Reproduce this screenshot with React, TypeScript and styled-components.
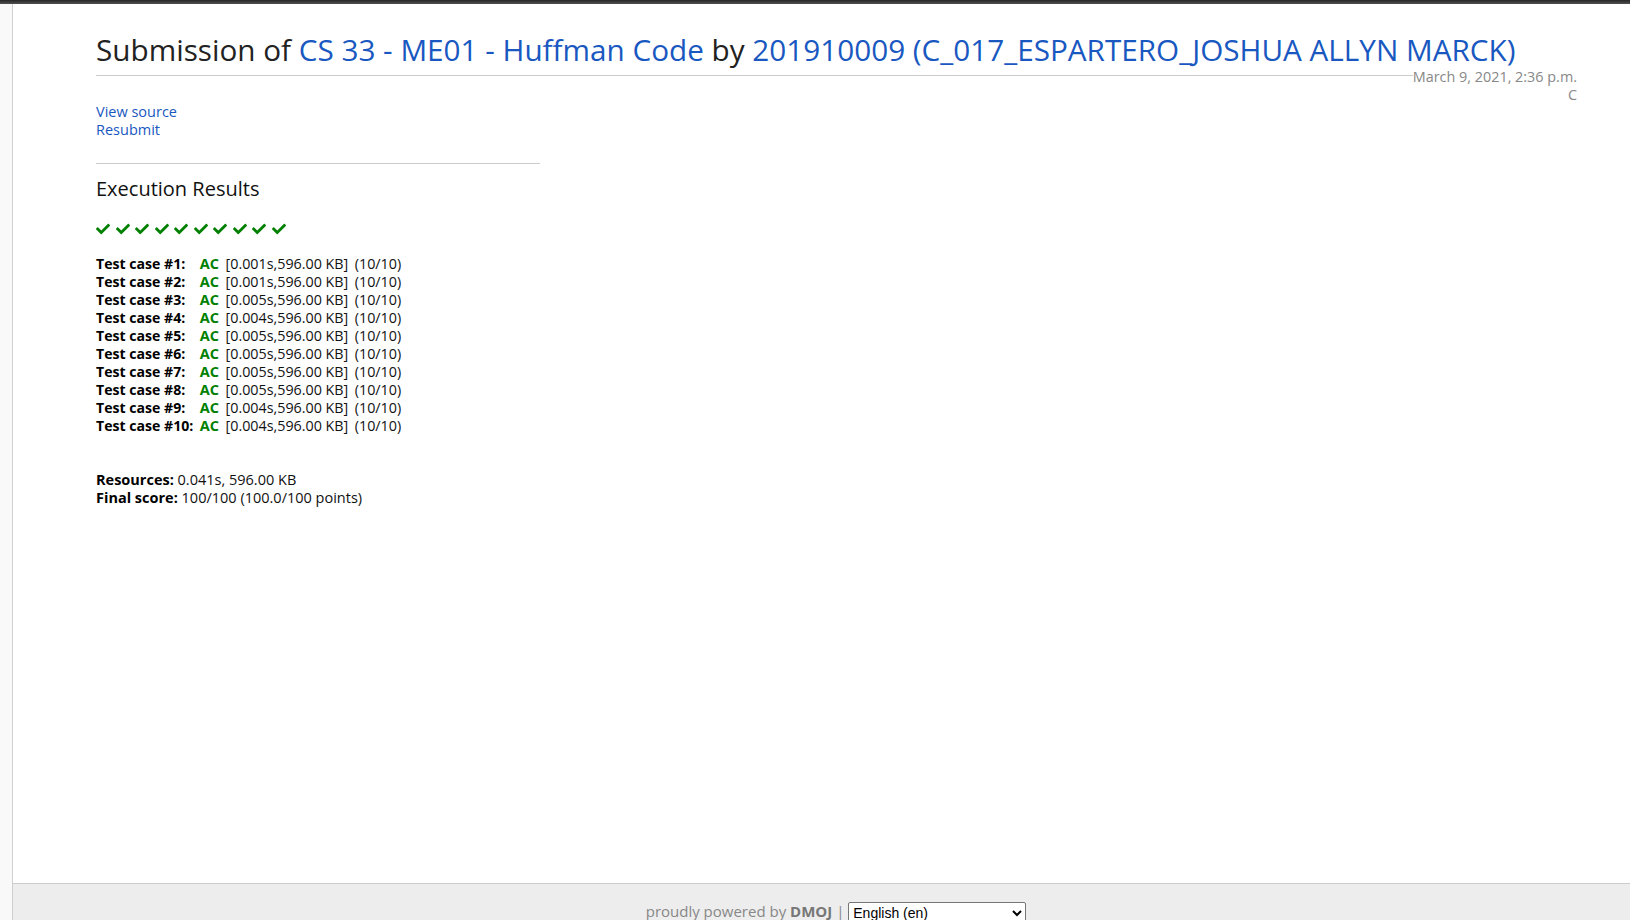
import React from 'react';
import styled, { createGlobalStyle } from 'styled-components';
import { FaCheck } from 'react-icons/fa';

const GlobalStyle = createGlobalStyle`
  html, body { margin: 0; padding: 0; }
  body {
    background: #f9f9f9;
    font-family: "Open Sans", "Noto Sans", sans-serif;
    color: #000;
    overflow: hidden;
  }
  a { color: #1958c1; text-decoration: none; }
`;

const TopBar = styled.div`
  height: 4px;
  background: linear-gradient(#262626, #505050);
`;

const Frame = styled.div`
  margin-left: 12px;
  border-left: 1px solid #cfcfcf;
  background: #fff;
  display: flex;
  flex-direction: column;
`;

const Main = styled.main`
  min-height: 879px;
  box-sizing: border-box;
  padding: 29px 53px 0 83px;
`;

const Title = styled.h2`
  margin: 0;
  font-size: 29.7px;
  font-weight: 400;
  line-height: 34px;
  color: #222;
  white-space: nowrap;
`;

const InfoRow = styled.div`
  display: flex;
  align-items: flex-start;
`;

const Rule = styled.div`
  flex: 1;
  height: 1px;
  margin-top: 8px;
  background: #cccccc;
`;

const SubInfo = styled.div`
  padding-top: 1px;
  margin-bottom: -1px;
  text-align: right;
  font-size: 14.4px;
  line-height: 18px;
  color: #888;
`;

const Actions = styled.div`
  display: flex;
  flex-direction: column;
  font-size: 14.5px;
  line-height: 18px;
`;

const Divider = styled.hr`
  width: 444px;
  margin: 24px 0 0;
  border: 0;
  border-top: 1px solid #cccccc;
  text-align: left;
`;

const SectionTitle = styled.h3`
  margin: 13px 0 0;
  font-size: 20px;
  font-weight: 400;
  line-height: 24px;
  color: #111;
`;

const CheckRow = styled.div`
  display: flex;
  gap: 5.5px;
  margin-top: 21px;
  height: 14px;
  align-items: center;
  color: #008000;
`;

const CaseGrid = styled.div`
  display: grid;
  grid-template-columns: auto auto auto auto;
  justify-content: start;
  column-gap: 6.5px;
  margin-top: 19px;
  font-size: 14.3px;
  line-height: 18px;
  color: #111;
`;

const CaseLabel = styled.span`
  font-size: 14.1px;
  font-weight: 700;
  color: #000;
`;

const Verdict = styled.span`
  font-size: 14.5px;
  font-weight: 700;
  color: #008000;
`;

const Summary = styled.div`
  margin-top: 36px;
  font-size: 14.5px;
  line-height: 18px;
  color: #111;
`;

const SummaryLine = styled.div`
  height: 18px;
`;

const SummaryKey = styled.b`
  color: #000;
`;

const Footer = styled.footer`
  border-top: 1px solid #cccccc;
  background: #ededed;
  padding: 18px 0 0 29px;
  height: 60px;
  text-align: center;
  font-size: 15px;
  line-height: 18px;
  color: #888;
`;

const Brand = styled.b`
  color: #777;
`;

const LangSelect = styled.select`
  width: 178px;
  height: 22px;
  font-family: Arial, "Liberation Sans", sans-serif;
  font-size: 14px;
  color: #000;
  background: #fff;
  border: 1px solid #767676;
  border-radius: 2px;
  vertical-align: top;
`;

const cases = [
  '0.001s', '0.001s', '0.005s', '0.004s', '0.005s',
  '0.005s', '0.005s', '0.005s', '0.004s', '0.004s',
];

export default function App() {
  return (
    <>
      <GlobalStyle />
      <TopBar />
      <Frame>
        <Main>
          <Title>
            Submission of <a href="#">CS 33 - ME01 - Huffman Code</a> by{' '}
            <a href="#">201910009 (C_017_ESPARTERO_JOSHUA ALLYN MARCK)</a>
          </Title>
          <InfoRow>
            <Rule />
            <SubInfo>
              <div>March 9, 2021, 2:36 p.m.</div>
              <div>C</div>
            </SubInfo>
          </InfoRow>
          <Actions>
            <div><a href="#">View source</a></div>
            <div><a href="#">Resubmit</a></div>
          </Actions>
          <Divider />
          <SectionTitle>Execution Results</SectionTitle>
          <CheckRow>
            {cases.map((_, i) => (
              <FaCheck key={i} size={14} />
            ))}
          </CheckRow>
          <CaseGrid>
            {cases.map((t, i) => (
              <React.Fragment key={i}>
                <CaseLabel>Test case #{i + 1}:</CaseLabel>
                <Verdict>AC</Verdict>
                <span>[{t},596.00 KB]</span>
                <span>(10/10)</span>
              </React.Fragment>
            ))}
          </CaseGrid>
          <Summary>
            <SummaryLine><SummaryKey>Resources:</SummaryKey> 0.041s, 596.00 KB</SummaryLine>
            <SummaryLine><SummaryKey>Final score:</SummaryKey> 100/100 (100.0/100 points)</SummaryLine>
          </Summary>
        </Main>
        <Footer>
          proudly powered by <Brand>DMOJ</Brand> |{' '}
          <LangSelect defaultValue="en">
            <option value="en">English (en)</option>
          </LangSelect>
        </Footer>
      </Frame>
    </>
  );
}
